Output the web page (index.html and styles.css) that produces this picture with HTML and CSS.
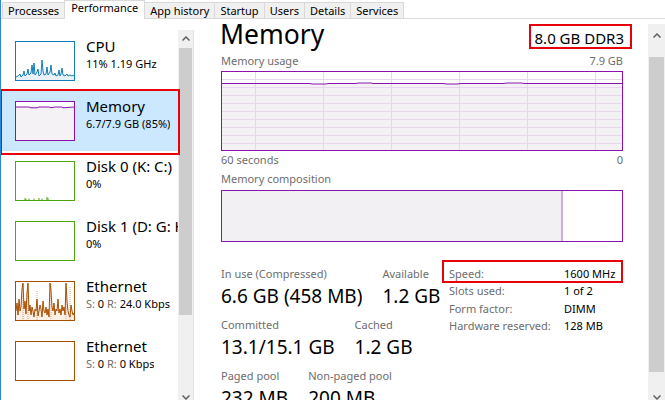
FILE: index.html
```html
<!DOCTYPE html>
<html>
<head>
<meta charset="utf-8">
<title>Task Manager - Performance</title>
<link rel="stylesheet" href="styles.css">
</head>
<body>
<div class="tabs">
  <div class="tab">Processes</div>
  <div class="tab active">Performance</div>
  <div class="tab">App history</div>
  <div class="tab">Startup</div>
  <div class="tab">Users</div>
  <div class="tab">Details</div>
  <div class="tab">Services</div>
</div>
<div class="main">
  <div class="sidebar">
    <div class="list">
      <div class="item">
        <svg class="thumb" width="60" height="40" viewBox="0 0 60 40">
          <rect x="0.5" y="0.5" width="59" height="39" fill="#fff" stroke="#117dbb"/>
          <polygon fill="#e8f1f8" points="1,39 1,36 3,35 5,33 6,36 8,34 9,30 10,35 12,33 13,28 14,34 16,32 17,24 18,33 19,22 20,34 22,31 23,28 24,35 26,33 27,19 28,30 29,34 31,33 32,26 33,34 35,31 36,24 37,33 39,34 40,32 41,35 43,34 44,29 45,35 46,33 47,27 48,34 50,35 52,33 53,35 55,34 57,35 59,34 59,39"/>
          <polyline fill="none" stroke="#117dbb" stroke-width="1" points="1,36 3,35 5,33 6,36 8,34 9,30 10,35 12,33 13,28 14,34 16,32 17,24 18,33 19,22 20,34 22,31 23,28 24,35 26,33 27,19 28,30 29,34 31,33 32,26 33,34 35,31 36,24 37,33 39,34 40,32 41,35 43,34 44,29 45,35 46,33 47,27 48,34 50,35 52,33 53,35 55,34 57,35 59,34"/>
        </svg>
        <div class="info"><div class="name">CPU</div><div class="sub">11% 1.19 GHz</div></div>
      </div>
      <div class="item selected">
        <svg class="thumb" width="60" height="40" viewBox="0 0 60 40">
          <rect x="0.5" y="0.5" width="59" height="39" fill="#fff" stroke="#8b12ae"/>
          <polygon fill="#f4f2f4" points="1,39 1,6 14,6 16,6.8 22,6.8 24,6 34,6 36,6.8 40,6 47,6 48,6.8 52,6.5 59,6 59,39"/>
          <polyline fill="none" stroke="#8b12ae" stroke-width="1" points="1,6 14,6 16,6.8 22,6.8 24,6 34,6 36,6.8 40,6 47,6 48,6.8 52,6.5 59,6"/>
          <rect x="0.5" y="0.5" width="59" height="39" fill="none" stroke="#8b12ae"/>
        </svg>
        <div class="info"><div class="name">Memory</div><div class="sub">6.7/7.9 GB (85%)</div></div>
      </div>
      <div class="item">
        <svg class="thumb" width="60" height="40" viewBox="0 0 60 40">
          <rect x="0.5" y="0.5" width="59" height="39" fill="#fff" stroke="#4da60c"/>
          <path d="M10 39V37M11 39V38M14 39V37.5M19 39V37.5M24 39V37M27 39V37.5M32 39V36M33 39V37" stroke="#4da60c" stroke-width="1" fill="none"/>
        </svg>
        <div class="info"><div class="name">Disk 0 (K: C:)</div><div class="sub">0%</div></div>
      </div>
      <div class="item">
        <svg class="thumb" width="60" height="40" viewBox="0 0 60 40">
          <rect x="0.5" y="0.5" width="59" height="39" fill="#fff" stroke="#4da60c"/>
        </svg>
        <div class="info"><div class="name">Disk 1 (D: G: H:)</div><div class="sub">0%</div></div>
      </div>
      <div class="item">
        <svg class="thumb" width="60" height="40" viewBox="0 0 60 40">
          <rect x="0.5" y="0.5" width="59" height="39" fill="#fff" stroke="#a74f01"/>
          <polygon fill="#fcefe4" points="1,39 1,30 2,22 3,34 4,18 5,30 6,26 7,8 8,2 9,28 10,20 11,33 12,12 13,2 14,30 15,24 16,34 17,26 18,30 19,36 20,28 21,30 22,18 23,35 24,30 25,24 26,28 27,36 28,20 29,30 30,32 31,26 32,34 33,28 34,36 35,2 36,10 37,26 38,30 39,22 40,34 41,28 42,30 43,18 44,32 45,28 46,34 47,24 48,30 49,26 50,34 51,2 52,20 53,30 54,34 55,36 56,24 57,30 58,34 59,32 59,39"/>
          <path d="M8 3V39M13 3V39M36 3V39M51 3V39M55 6V39M22 10V39" stroke="#d98c66" stroke-width="0.8" stroke-dasharray="1 1" fill="none"/>
          <polyline fill="none" stroke="#a74f01" stroke-width="1" points="1,30 2,22 3,34 4,18 5,30 6,26 7,8 8,2 9,28 10,20 11,33 12,12 13,2 14,30 15,24 16,34 17,26 18,30 19,36 20,28 21,30 22,18 23,35 24,30 25,24 26,28 27,36 28,20 29,30 30,32 31,26 32,34 33,28 34,36 35,2 36,10 37,26 38,30 39,22 40,34 41,28 42,30 43,18 44,32 45,28 46,34 47,24 48,30 49,26 50,34 51,2 52,20 53,30 54,34 55,36 56,24 57,30 58,34 59,32"/>
          <rect x="0.5" y="0.5" width="59" height="39" fill="none" stroke="#a74f01"/>
        </svg>
        <div class="info"><div class="name">Ethernet</div><div class="sub"><span class="dim">S:</span> 0 <span class="dim">R:</span> 24.0 Kbps</div></div>
      </div>
      <div class="item">
        <svg class="thumb" width="60" height="40" viewBox="0 0 60 40">
          <rect x="0.5" y="0.5" width="59" height="39" fill="#fff" stroke="#a74f01"/>
        </svg>
        <div class="info"><div class="name">Ethernet</div><div class="sub"><span class="dim">S:</span> 0 <span class="dim">R:</span> 0 Kbps</div></div>
      </div>
    </div>
    <div class="vscroll vscroll-left">
      <div class="arrow"><svg width="8" height="5" viewBox="0 0 8 5"><polyline points="0.5,4.5 4,1 7.5,4.5" fill="none" stroke="#606060" stroke-width="1.5"/></svg></div>
      <div class="sthumb sthumb-left"></div>
      <div class="strack"></div>
      <div class="arrow"><svg width="8" height="5" viewBox="0 0 8 5"><polyline points="0.5,0.5 4,4 7.5,0.5" fill="none" stroke="#606060" stroke-width="1.5"/></svg></div>
    </div>
  </div>
  <div class="panel">
    <div class="title-row">
      <div class="title">Memory</div>
      <div class="spec">8.0 GB DDR3</div>
    </div>
    <div class="graph-head"><span>Memory usage</span><span>7.9 GB</span></div>
    <svg class="graph" width="402" height="80" viewBox="0 0 402 80">
      <rect x="0" y="0" width="402" height="80" fill="#fff"/>
      <polygon fill="#f4f1f5" points="1,12.5 88,12.5 92,13 104,13 108,12.5 134,12.5 138,12 150,12 152,12.5 222,12.5 226,13 236,13 240,12.5 282,12.5 286,12 300,12 304,12.5 401,12.5 401,79 1,79"/>
      <g stroke="#e6d6ee" stroke-width="1">
        <path d="M34.5 1V79M102.5 1V79M170.5 1V79M238.5 1V79M306.5 1V79M374.5 1V79"/>
        <path d="M1 8.5H401M1 16.5H401M1 24.5H401M1 32.5H401M1 40.5H401M1 48.5H401M1 56.5H401M1 64.5H401M1 72.5H401"/>
      </g>
      <polyline fill="none" stroke="#8b12ae" stroke-width="1" points="1,12.5 88,12.5 92,13 104,13 108,12.5 134,12.5 138,12 150,12 152,12.5 222,12.5 226,13 236,13 240,12.5 282,12.5 286,12 300,12 304,12.5 401,12.5"/>
      <rect x="0.5" y="0.5" width="401" height="79" fill="none" stroke="#8b12ae"/>
    </svg>
    <div class="graph-foot"><span>60 seconds</span><span>0</span></div>
    <div class="comp-label">Memory composition</div>
    <svg class="comp" width="402" height="52" viewBox="0 0 402 52">
      <rect x="0" y="0" width="402" height="52" fill="#fff"/>
      <rect x="1" y="1" width="339" height="50" fill="#f3f0f4"/>
      <rect x="340" y="1" width="2" height="50" fill="#cbb0dc"/>
      <rect x="0.5" y="0.5" width="401" height="51" fill="none" stroke="#8b12ae"/>
    </svg>
    <div class="stats">
      <div class="stats-left">
        <div class="srow">
          <div class="stat"><div class="lbl">In use (Compressed)</div><div class="val">6.6 GB (458 MB)</div></div>
          <div class="stat"><div class="lbl">Available</div><div class="val">1.2 GB</div></div>
        </div>
        <div class="srow">
          <div class="stat"><div class="lbl">Committed</div><div class="val">13.1/15.1 GB</div></div>
          <div class="stat"><div class="lbl">Cached</div><div class="val">1.2 GB</div></div>
        </div>
        <div class="srow">
          <div class="stat"><div class="lbl">Paged pool</div><div class="val">232 MB</div></div>
          <div class="stat"><div class="lbl">Non-paged pool</div><div class="val">200 MB</div></div>
        </div>
      </div>
      <div class="stats-right">
        <div class="kv highlight"><span class="k">Speed:</span><span class="v">1600 MHz</span></div>
        <div class="kv"><span class="k">Slots used:</span><span class="v">1 of 2</span></div>
        <div class="kv"><span class="k">Form factor:</span><span class="v">DIMM</span></div>
        <div class="kv"><span class="k">Hardware reserved:</span><span class="v">128 MB</span></div>
      </div>
    </div>
  </div>
  <div class="vscroll vscroll-right">
    <div class="arrow arrow-tall"><svg width="8" height="5" viewBox="0 0 8 5"><polyline points="0.5,4.5 4,1 7.5,4.5" fill="none" stroke="#606060" stroke-width="1.5"/></svg></div>
    <div class="sthumb sthumb-right"></div>
    <div class="strack"></div>
    <div class="arrow"><svg width="8" height="5" viewBox="0 0 8 5"><polyline points="0.5,0.5 4,4 7.5,0.5" fill="none" stroke="#606060" stroke-width="1.5"/></svg></div>
  </div>
</div>
</body>
</html>
```
FILE: styles.css
```css
* { box-sizing: border-box; margin: 0; padding: 0; }
html, body { width: 665px; height: 400px; overflow: hidden; background: #fff; }
body {
  font-family: "Noto Sans", "Open Sans", sans-serif;
  color: #000;
  border-left: 1px solid #2b87d8;
}

/* Tabs */
.tabs {
  display: flex;
  align-items: flex-end;
  height: 19px;
  padding-left: 1px;
  border-bottom: 1px solid #d9d9d9;
}
.tab {
  height: 16px;
  padding: 0 5px;
  border-top: 1px solid #d9d9d9;
  border-left: 1px solid #d9d9d9;
  background: #f0f0f0;
  font-size: 11px;
  line-height: 15px;
  white-space: nowrap;
}
.tab:last-child { border-right: 1px solid #d9d9d9; }
.tab.active {
  height: 19px;
  padding: 0 6px;
  line-height: 14px;
  background: #fff;
  border-right: 1px solid #d9d9d9;
  position: relative;
  top: 1px;
}
.tab.active + .tab { border-left: none; }

/* Main */
.main {
  display: flex;
  height: 381px;
  overflow: hidden;
}

/* Sidebar */
.sidebar {
  display: flex;
  width: 193px;
  flex: none;
}
.list {
  width: 177px;
  padding-top: 12px;
}
.item {
  display: flex;
  height: 60px;
  padding-left: 14px;
  white-space: nowrap;
  overflow: hidden;
}
.item.selected {
  background: #cce8ff;
  position: relative;
  overflow: visible;
}
.item.selected::after {
  content: "";
  position: absolute;
  top: -2px;
  bottom: -4px;
  left: -1px;
  right: -2px;
  border: 2px solid #e8000b;
  z-index: 2;
}
.thumb {
  flex: none;
  margin-top: 10px;
  display: block;
}
.info {
  margin-left: 11px;
  padding-top: 6px;
  overflow: hidden;
}
.name {
  font-size: 15px;
  line-height: 18px;
}
.sub {
  margin-top: 2px;
  font-size: 11px;
  line-height: 14px;
}
.dim { color: #6d6d6d; }

/* Scrollbars */
.vscroll {
  display: flex;
  flex-direction: column;
  flex: none;
  background: #f0f0f0;
}
.vscroll-left {
  width: 16px;
  margin-top: 11px;
  height: 376px;
  border-right: 1px solid #e2e2e2;
}
.vscroll-right {
  width: 17px;
  margin-top: 5px;
  height: 382px;
}
.arrow {
  height: 17px;
  flex: none;
  display: flex;
  align-items: center;
  justify-content: center;
}
.arrow-tall { height: 22px; }
.sthumb {
  flex: none;
  background: #cdcdcd;
  margin: 0 1px;
}
.sthumb-left { margin-top: 1px; height: 267px; }
.sthumb-right { margin-top: 11px; height: 315px; }
.strack { flex: 1; }

/* Panel */
.panel {
  width: 454px;
  flex: none;
  padding-left: 27px;
  padding-right: 25px;
}
.title-row {
  display: flex;
  justify-content: space-between;
  align-items: flex-start;
  padding-top: 1px;
}
.title {
  font-size: 26.5px;
  line-height: 28px;
  margin-left: -1px;
}
.spec {
  margin-top: 4px;
  margin-right: -9px;
  border: 2px solid #e8000b;
  padding: 3px 6px 0 4px;
  font-size: 15px;
  line-height: 18px;
  height: 25px;
}
.graph-head, .graph-foot {
  display: flex;
  justify-content: space-between;
  font-size: 11px;
  line-height: 14px;
  color: #6d6d6d;
}
.graph-head { margin-top: 5px; }
.graph { display: block; margin-top: 3px; }
.graph-foot { margin-top: 2px; }
.comp-label {
  margin-top: 5px;
  font-size: 11px;
  line-height: 14px;
  color: #6d6d6d;
}
.comp { display: block; margin-top: 4px; }

/* Stats */
.stats {
  display: flex;
  margin-top: 25px;
}
.stats-left {
  width: 221px;
  flex: none;
  display: flex;
  flex-direction: column;
  gap: 10px;
}
.srow {
  display: flex;
  gap: 20px;
}
.lbl {
  font-size: 11px;
  line-height: 14px;
  color: #6d6d6d;
  white-space: nowrap;
}
.val {
  margin-top: 3px;
  font-size: 19px;
  line-height: 24px;
  white-space: nowrap;
}
.stats-right {
  width: 186px;
  padding-left: 7px;
  margin-top: -2px;
}
.kv {
  display: flex;
  font-size: 11px;
  line-height: 17.4px;
  white-space: nowrap;
}
.kv.highlight { position: relative; }
.kv.highlight::after {
  content: "";
  position: absolute;
  top: -5px;
  bottom: -1px;
  left: -7px;
  right: 0;
  border: 2px solid #e8000b;
}
.k { width: 115px; color: #6d6d6d; }
.v { color: #000; }
```
